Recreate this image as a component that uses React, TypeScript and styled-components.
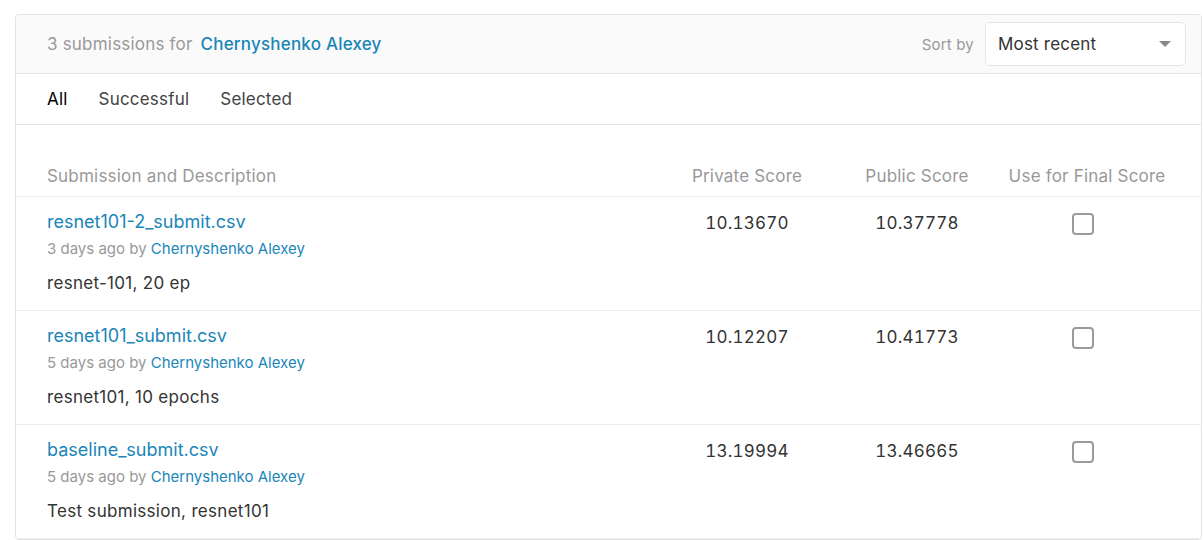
import React from "react";
import styled, { createGlobalStyle } from "styled-components";

const Global = createGlobalStyle`
  html, body { margin: 0; padding: 0; background: #fff; }
  body {
    font-family: Inter, "Noto Sans", Arial, sans-serif;
    letter-spacing: 0.2px;
    -webkit-font-smoothing: antialiased;
  }
`;

const Page = styled.div`
  padding: 14px 1px 0 15px;
`;

const Card = styled.div`
  border: 1px solid #e3e3e3;
  border-radius: 4px;
  background: #fff;
  overflow: hidden;
`;

const Header = styled.div`
  display: flex;
  align-items: center;
  justify-content: space-between;
  height: 58px;
  padding: 0 15px 0 31px;
  background: #fafafa;
  border-bottom: 1px solid #e6e6e6;
`;

const Title = styled.div`
  font-size: 17px;
  color: #999;
`;

const Link = styled.a<{ $size?: number }>`
  color: #1a86b8;
  text-decoration: none;
  font-size: ${(p) => p.$size ?? 17}px;
`;

const OwnerLink = styled(Link)`
  margin-left: 3px;
  font-weight: 500;
`;

const SortGroup = styled.div`
  display: flex;
  align-items: center;
  gap: 11px;
`;

const SortLabel = styled.span`
  font-size: 15px;
  color: #999;
`;

const Select = styled.div`
  box-sizing: border-box;
  width: 201px;
  height: 44px;
  border: 1px solid #e6e6e6;
  border-radius: 5px;
  background: #fff;
  display: flex;
  align-items: center;
  justify-content: space-between;
  padding: 0 14px 0 12px;
  font-size: 17px;
  color: #333;
`;

const Caret = styled.span`
  width: 0;
  height: 0;
  border-left: 6px solid transparent;
  border-right: 6px solid transparent;
  border-top: 6px solid #888;
`;

const Tabs = styled.div`
  display: flex;
  gap: 31px;
  height: 50px;
  align-items: center;
  padding-left: 31px;
  border-bottom: 1px solid #e3e3e3;
`;

const Tab = styled.span<{ $active?: boolean }>`
  font-size: 17px;
  color: ${(p) => (p.$active ? "#000" : "#444")};
`;

const Grid = styled.div`
  display: grid;
  grid-template-columns: 1fr 170px 170px 170px;
  padding: 0 29px 0 31px;
`;

const HeadRow = styled(Grid)`
  padding-top: 39px;
  padding-bottom: 8px;
  border-bottom: 1px solid #ebebeb;
  line-height: 24px;
  font-size: 17px;
  color: #999;
`;

const HeadCell = styled.div<{ $center?: boolean }>`
  text-align: ${(p) => (p.$center ? "center" : "left")};
`;

const Row = styled(Grid)`
  padding-top: 13px;
  padding-bottom: 15px;
  border-bottom: 1px solid #ebebeb;
`;

const NameCell = styled.div`
  display: flex;
  flex-direction: column;
`;

const FileName = styled(Link)`
  line-height: 24px;
  font-size: 18px;
  letter-spacing: 0;
`;

const Meta = styled.div`
  margin-top: 4px;
  line-height: 22px;
  font-size: 15px;
  letter-spacing: 0;
  color: #999;
`;

const Desc = styled.div`
  margin-top: 11px;
  line-height: 24px;
  font-size: 17px;
  letter-spacing: 0.3px;
  color: #333;
`;

const Score = styled.div`
  text-align: center;
  line-height: 24px;
  font-size: 17px;
  font-feature-settings: "tnum" 1;
  color: #333;
  padding-top: 1px;
`;

const CheckCell = styled.div`
  display: flex;
  justify-content: center;
  padding: 3px 8px 0 0;
`;

const Check = styled.span`
  box-sizing: border-box;
  width: 22px;
  height: 22px;
  border: 2px solid #9a9a9a;
  border-radius: 4px;
  background: #fff;
`;

const rows = [
  { file: "resnet101-2_submit.csv", ago: "3 days ago", desc: "resnet-101, 20 ep", priv: "10.13670", pub: "10.37778" },
  { file: "resnet101_submit.csv", ago: "5 days ago", desc: "resnet101, 10 epochs", priv: "10.12207", pub: "10.41773" },
  { file: "baseline_submit.csv", ago: "5 days ago", desc: "Test submission, resnet101", priv: "13.19994", pub: "13.46665" },
];

export default function App() {
  return (
    <Page>
      <Global />
      <Card>
        <Header>
          <Title>
            3 submissions for <OwnerLink href="#">Chernyshenko Alexey</OwnerLink>
          </Title>
          <SortGroup>
            <SortLabel>Sort by</SortLabel>
            <Select>
              <span>Most recent</span>
              <Caret />
            </Select>
          </SortGroup>
        </Header>
        <Tabs>
          <Tab $active>All</Tab>
          <Tab>Successful</Tab>
          <Tab>Selected</Tab>
        </Tabs>
        <HeadRow>
          <HeadCell>Submission and Description</HeadCell>
          <HeadCell $center>Private Score</HeadCell>
          <HeadCell $center>Public Score</HeadCell>
          <HeadCell $center>Use for Final Score</HeadCell>
        </HeadRow>
        {rows.map((r) => (
          <Row key={r.file}>
            <NameCell>
              <FileName href="#">{r.file}</FileName>
              <Meta>
                {r.ago} by <Link href="#" $size={15}>Chernyshenko Alexey</Link>
              </Meta>
              <Desc>{r.desc}</Desc>
            </NameCell>
            <Score>{r.priv}</Score>
            <Score>{r.pub}</Score>
            <CheckCell>
              <Check />
            </CheckCell>
          </Row>
        ))}
      </Card>
    </Page>
  );
}
